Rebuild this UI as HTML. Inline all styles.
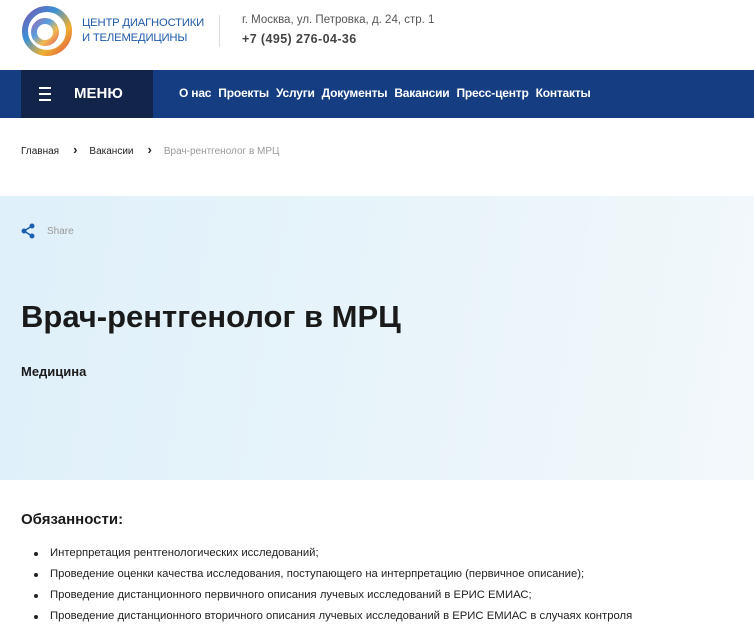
<!DOCTYPE html>
<html><head><meta charset="utf-8"><style>
*{margin:0;padding:0;box-sizing:border-box}
body{width:754px;height:626px;overflow:hidden;background:#fff;font-family:"Liberation Sans",sans-serif;color:#1a1a1a}
.hdr{height:70px;position:relative}
.logo{position:absolute;left:21px;top:5px;width:52px;height:52px}
.brand{position:absolute;left:82px;top:16px;font-size:11.3px;line-height:15px;color:#1f5aa8;letter-spacing:-.2px}
.sep{position:absolute;left:219px;top:15px;width:1px;height:32px;background:#ddd}
.addr{position:absolute;left:242px;top:14px;font-size:11.5px;color:#555}
.tel{position:absolute;left:242px;top:32px;font-size:12.5px;font-weight:bold;color:#444;letter-spacing:.4px}
.nav{position:absolute;left:0;top:70px;width:754px;height:48px;background:#153d82}
.menu{position:absolute;left:21px;top:0;width:132px;height:48px;background:#13244b;color:#fff}
.menu .b{position:absolute;left:18px;top:17px;width:12px}
.menu .b i{display:block;height:2px;background:#fff;margin-bottom:4px}
.menu span{position:absolute;left:53px;top:15px;font-weight:bold;font-size:15px}
.links{position:absolute;left:179px;top:16px;font-size:12px;font-weight:bold;color:#fff;letter-spacing:-.2px}
.links a{margin-right:7px}
.bc{position:absolute;left:21px;top:145px;font-size:10px;color:#222}
.bc b{font-weight:bold;font-size:13px;line-height:10px;margin:0 12px 0 14px}
.bc .c{color:#999}
.hero{position:absolute;left:0;top:196px;width:754px;height:284px;background:linear-gradient(100deg,#dff0fa 0%,#e8f4fa 55%,#f3f8fb 100%)}
.share{position:absolute;font-size:10px;color:#999}
h1{position:absolute;left:21px;top:103px;font-size:31px;font-weight:bold;color:#1a1a1a}
.cat{position:absolute;left:21px;top:168px;font-size:13px;font-weight:bold}
h2{position:absolute;left:21px;top:511px;font-size:15px;font-weight:bold}
ul{position:absolute;left:50px;top:547px;font-size:11.3px;color:#222;list-style:none}
li{height:21px;position:relative}
li:before{content:"";position:absolute;left:-16px;top:5px;width:4px;height:4px;border-radius:2px;background:#222}
</style></head><body>
<div class="hdr">
<svg class="logo" viewBox="0 0 52 52"><defs><linearGradient id="g" x1="0" y1="0" x2="1" y2="1"><stop offset="0" stop-color="#7a5ab0"/><stop offset=".35" stop-color="#3a8fd8"/><stop offset=".7" stop-color="#f0b030"/><stop offset="1" stop-color="#e05a40"/></linearGradient></defs>
<circle cx="26" cy="26" r="22" fill="none" stroke="url(#g)" stroke-width="6"/><circle cx="24" cy="27" r="11" fill="none" stroke="url(#g)" stroke-width="6" opacity=".85"/><circle cx="24" cy="27" r="6" fill="#fff"/></svg>
<div class="brand">ЦЕНТР ДИАГНОСТИКИ<br>И ТЕЛЕМЕДИЦИНЫ</div>
<div class="sep"></div>
<div class="addr">г. Москва, ул. Петровка, д. 24, стр. 1</div>
<div class="tel">+7 (495) 276-04-36</div>
</div>
<div class="nav"><div class="menu"><div class="b"><i></i><i></i><i></i></div><span>МЕНЮ</span></div>
<div class="links"><a>О нас</a><a>Проекты</a><a>Услуги</a><a>Документы</a><a>Вакансии</a><a>Пресс-центр</a><a>Контакты</a></div></div>
<div class="bc">Главная<b>›</b>Вакансии<b>›</b><span class="c">Врач-рентгенолог в МРЦ</span></div>
<div class="hero">
<svg style="position:absolute;left:21px;top:27px" width="14" height="16" viewBox="0 0 14 16"><circle cx="11" cy="3" r="2.5" fill="#1b5fb0"/><circle cx="3" cy="8" r="2.5" fill="#1b5fb0"/><circle cx="11" cy="13" r="2.5" fill="#1b5fb0"/><path d="M11 3L3 8L11 13" stroke="#1b5fb0" stroke-width="1.6" fill="none"/></svg>
<div class="share" style="left:47px;top:30px">Share</div>
<h1>Врач-рентгенолог в МРЦ</h1>
<div class="cat">Медицина</div>
</div>
<h2>Обязанности:</h2>
<ul>
<li>Интерпретация рентгенологических исследований;</li>
<li>Проведение оценки качества исследования, поступающего на интерпретацию (первичное описание);</li>
<li>Проведение дистанционного первичного описания лучевых исследований в ЕРИС ЕМИАС;</li>
<li>Проведение дистанционного вторичного описания лучевых исследований в ЕРИС ЕМИАС в случаях контроля</li>
</ul>
</body></html>
